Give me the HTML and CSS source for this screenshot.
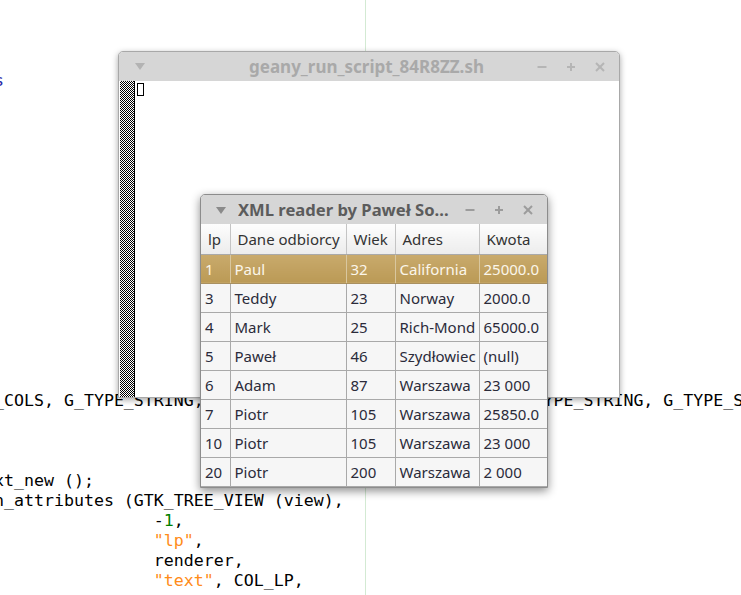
FILE: index.html
```html
<!DOCTYPE html>
<html>
<head>
<meta charset="utf-8">
<link rel="stylesheet" href="styles.css">
</head>
<body>
<div class="editor">
<pre class="code"><span class="kw">s</span>















_COLS, G_TYPE_STRING, G_TYPE_STRING, G_TYPE_STRING, G_TYPE_STRING, G_TYPE_STRING);



xt_new ();
n_attributes (GTK_TREE_VIEW (view),
                -<span class="num">1</span>,
                <span class="str">"lp"</span>,
                renderer,
                <span class="str">"text"</span>, COL_LP,
</pre>
</div>

<div class="win term">
  <div class="titlebar">
    <div class="tb-left"><svg class="tri" width="10" height="7" viewBox="0 0 10 7"><polygon points="0,0 10,0 5,7"/></svg></div>
    <div class="title">geany_run_script_84R8ZZ.sh</div>
    <div class="btns">
      <span class="btn"><svg width="10" height="10" viewBox="0 0 10 10"><line x1="0.5" y1="5" x2="9.5" y2="5"/></svg></span>
      <span class="btn"><svg width="10" height="10" viewBox="0 0 10 10"><line x1="1" y1="5" x2="9" y2="5"/><line x1="5" y1="1" x2="5" y2="9"/></svg></span>
      <span class="btn"><svg width="10" height="10" viewBox="0 0 10 10"><line x1="1" y1="1" x2="9" y2="9"/><line x1="9" y1="1" x2="1" y2="9"/></svg></span>
    </div>
  </div>
  <div class="term-body">
    <div class="checker"></div>
    <div class="vsep"></div>
    <div class="cursor"></div>
  </div>
</div>

<div class="win xml">
  <div class="titlebar xtb">
    <svg class="tri" width="10" height="7" viewBox="0 0 10 7"><polygon points="0,0 10,0 5,7"/></svg>
    <div class="xtitle">XML reader by Paweł So...</div>
    <div class="btns">
      <span class="btn"><svg width="10" height="10" viewBox="0 0 10 10"><line x1="0.5" y1="5" x2="9.5" y2="5"/></svg></span>
      <span class="btn"><svg width="10" height="10" viewBox="0 0 10 10"><line x1="1" y1="5" x2="9" y2="5"/><line x1="5" y1="1" x2="5" y2="9"/></svg></span>
      <span class="btn"><svg width="10" height="10" viewBox="0 0 10 10"><line x1="1" y1="1" x2="9" y2="9"/><line x1="9" y1="1" x2="1" y2="9"/></svg></span>
    </div>
  </div>
  <table class="grid">
    <colgroup>
      <col class="c1"><col class="c2"><col class="c3"><col class="c4"><col class="c5">
    </colgroup>
    <thead>
      <tr><th>lp</th><th>Dane odbiorcy</th><th>Wiek</th><th>Adres</th><th>Kwota</th></tr>
    </thead>
    <tbody>
      <tr class="sel"><td>1</td><td>Paul</td><td>32</td><td>California</td><td>25000.0</td></tr>
      <tr><td>3</td><td>Teddy</td><td>23</td><td>Norway</td><td>2000.0</td></tr>
      <tr><td>4</td><td>Mark</td><td>25</td><td>Rich-Mond</td><td>65000.0</td></tr>
      <tr><td>5</td><td>Paweł</td><td>46</td><td>Szydłowiec</td><td>(null)</td></tr>
      <tr><td>6</td><td>Adam</td><td>87</td><td>Warszawa</td><td>23 000</td></tr>
      <tr><td>7</td><td>Piotr</td><td>105</td><td>Warszawa</td><td>25850.0</td></tr>
      <tr><td>10</td><td>Piotr</td><td>105</td><td>Warszawa</td><td>23 000</td></tr>
      <tr><td>20</td><td>Piotr</td><td>200</td><td>Warszawa</td><td>2 000</td></tr>
    </tbody>
  </table>
</div>
</body>
</html>
```

FILE: styles.css
```css
html, body {
  margin: 0;
  padding: 0;
  width: 741px;
  height: 595px;
  overflow: hidden;
  background: #ffffff;
}

.editor {
  width: 741px;
  height: 595px;
  overflow: hidden;
  background: linear-gradient(to right, transparent 365px, #d3ead3 365px, #d3ead3 366px, transparent 366px);
}

.code {
  margin: 0 0 0 -6px;
  padding-top: 71px;
  font-family: "DejaVu Sans Mono", monospace;
  font-size: 16.6px;
  line-height: 20px;
  color: #000000;
  white-space: pre;
}

.kw { color: #2a2aa8; }
.num { color: #008000; }
.str { color: #ff8c1a; }

.win {
  position: absolute;
  box-sizing: border-box;
  border-radius: 5px 5px 0 0;
  overflow: hidden;
  font-family: "Noto Sans", "Open Sans", sans-serif;
}

.term {
  left: 118px;
  top: 51px;
  width: 502px;
  height: 347px;
  background: #ffffff;
  border: 1px solid #a8a8a8;
  box-shadow: 0 2px 6px rgba(0,0,0,0.35);
  display: flex;
  flex-direction: column;
}

.titlebar {
  height: 29px;
  background: #d6d6d6;
  display: grid;
  grid-template-columns: 1fr auto 1fr;
  align-items: center;
  padding-right: 5px;
}

.tb-left { padding-left: 16px; display: flex; }

.tri { fill: #b3b3b3; display: block; }

.title {
  font-weight: bold;
  font-size: 17px;
  color: #a9a9a9;
  white-space: nowrap;
  padding-bottom: 1px;
}

.btns {
  display: flex;
  justify-content: flex-end;
}

.btn {
  width: 29px;
  display: flex;
  justify-content: center;
}

.btn svg { display: block; stroke: #b5b5b5; stroke-width: 2; }

.term-body {
  flex: 1;
  display: flex;
  align-items: flex-start;
  padding-left: 1px;
}

.checker {
  width: 14px;
  align-self: stretch;
  background: repeating-conic-gradient(#000 0 25%, #fff 0 50%) 0 0 / 2px 2px;
}

.vsep {
  width: 1px;
  align-self: stretch;
  background: #000;
}

.cursor {
  width: 5px;
  height: 11px;
  border: 1px solid #000;
  margin: 2px 0 0 2px;
}

.xml {
  left: 200px;
  top: 194px;
  width: 348px;
  height: 294px;
  background: #f6f6f6;
  border: 1px solid #8c8c8c;
  box-shadow: 0 3px 10px rgba(0,0,0,0.45);
}

.xtb {
  display: flex;
  height: 29px;
  padding-left: 15px;
  background: #d6d6d6;
}

.xtb .tri { fill: #8a8a8a; margin-top: 1px; }

.xtitle {
  flex: 1;
  margin-left: 12px;
  font-weight: bold;
  font-size: 16.6px;
  color: #5c5c5c;
  white-space: nowrap;
  overflow: hidden;
  padding-bottom: 1px;
}

.xtb .btn svg { stroke: #9c9c9c; }

.grid {
  border-collapse: collapse;
  table-layout: fixed;
  width: 346px;
  font-size: 15px;
  color: #2b2b3a;
}

.c1 { width: 29px; }
.c2 { width: 116px; }
.c3 { width: 49px; }
.c4 { width: 84px; }
.c5 { width: 68px; }

.grid th {
  height: 30px;
  padding: 0 0 0 7px;
  box-sizing: border-box;
  text-align: left;
  font-weight: normal;
  color: #333333;
  background: linear-gradient(#fdfdfd, #ececec);
  border-right: 1px solid #c4c4c4;
  border-bottom: 1px solid #a9a9a9;
  white-space: nowrap;
  overflow: hidden;
}

.grid td {
  height: 29px;
  box-sizing: border-box;
  padding: 0 0 0 4px;
  border-right: 1px solid #a9a9a9;
  border-bottom: 1px solid #a9a9a9;
  white-space: nowrap;
  overflow: hidden;
}

.grid th:last-child, .grid td:last-child { border-right: none; }

.grid tr.sel td {
  background: linear-gradient(#c9aa6c, #bb9a56);
  color: #fbf6ea;
  border-right-color: #d9c79f;
  border-bottom-color: #a99060;
}
```
